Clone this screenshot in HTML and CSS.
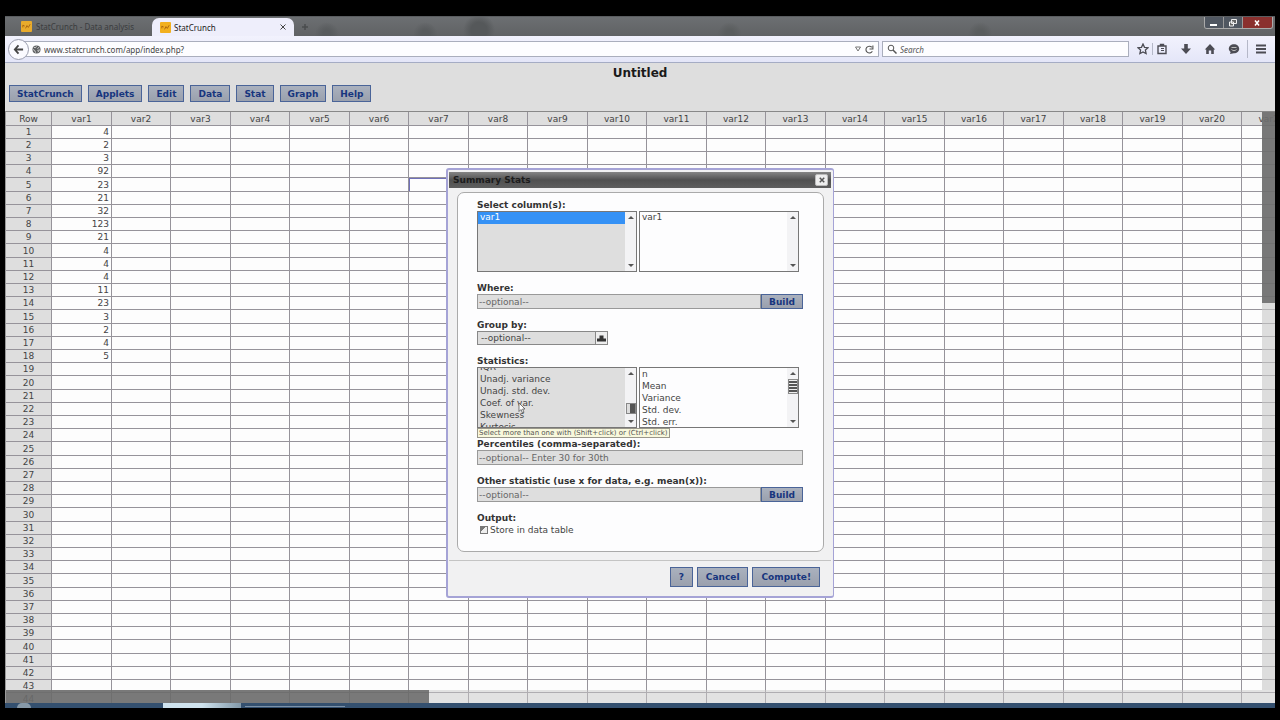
FILE: index.html
```
<!DOCTYPE html>
<html lang="en">
<head>
<meta charset="utf-8">
<title>StatCrunch</title>
<link rel="stylesheet" href="styles.css">
</head>
<body>
<div class="screen">
  <header class="titlebar">
    <div class="tab tab-idle">
      <svg class="favicon" viewBox="0 0 12 12"><rect width="12" height="12" rx="1" fill="#e9ab2c"/><path d="M2 7V4.500l2 1M5 8l1.500-3L8 7l2-3.500" stroke="#a8620f" fill="none"/></svg>
      <span>StatCrunch - Data analysis</span>
    </div>
    <div class="tab tab-active">
      <svg class="favicon" viewBox="0 0 12 12"><rect width="12" height="12" rx="1" fill="#f2b01e"/><path d="M2 7V4.500l2 1M5 8l1.500-3L8 7l2-3.500" stroke="#a8620f" fill="none"/></svg>
      <span>StatCrunch</span>
      <button class="tab-close" aria-label="Close tab"><svg viewBox="0 0 6 6"><path d="M.5.5l5 5M5.500.5l-5 5" stroke="#444" fill="none"/></svg></button>
    </div>
    <button class="tab-new" aria-label="New tab"><svg viewBox="0 0 8 8"><path d="M4 1v6M1 4h6" stroke="#4a4c4e" stroke-width="1.500"/></svg></button>
    <div class="aero"></div>
    <div class="window-buttons">
      <button class="wb" aria-label="Minimize"><svg viewBox="0 0 10 8"><path d="M1 6h7" stroke="#fff" stroke-width="2"/></svg></button>
      <button class="wb" aria-label="Restore"><svg viewBox="0 0 10 8"><path d="M3.500.5h5v4h-5zM1.500 3h4v4h-4z" stroke="#eee" fill="#666"/></svg></button>
      <button class="wb wb-close" aria-label="Close"><svg viewBox="0 0 10 8"><path d="M3 1.500l4 5M7 1.500l-4 5" stroke="#fff" stroke-width="1.500"/></svg></button>
    </div>
  </header>

  <nav class="navbar">
    <button class="back" aria-label="Back"><svg viewBox="0 0 12 12"><path d="M6 1.500L2 6l4 4.500M2 6h9" stroke="#444" stroke-width="2" fill="none"/></svg></button>
    <div class="address">
      <svg class="globe" viewBox="0 0 10 10"><circle cx="5" cy="5" r="4.500" fill="#5c5e60"/><path d="M2 2.500l2 .5 1-1.500M1 5l2 1 1 2.500M6 4l2-1.500M6 6l3-.5M6.500 8l1-1.500" stroke="#ddd" fill="none"/></svg>
      <input class="url" type="text" aria-label="Address" value="www.statcrunch.com/app/index.php?">
      <svg class="drop" viewBox="0 0 8 8"><path d="M1.500 2h5L4 6z" stroke="#777" fill="none"/></svg>
      <svg class="reload" viewBox="0 0 8 8"><path d="M6.500 5.500A3 3 0 1 1 6 2M7 .5V3.500H4" stroke="#555" fill="none"/></svg>
    </div>
    <label class="search">
      <svg class="lens" viewBox="0 0 10 10"><circle cx="4" cy="4" r="2.800" stroke="#555" fill="none"/><path d="M6 6l3.500 3.500" stroke="#555" stroke-width="1.500"/></svg>
      <input class="search-input" type="text" aria-label="Search" placeholder="Search">
    </label>
    <div class="tools">
      <button aria-label="Bookmark"><svg viewBox="0 0 12 12"><path d="M6 1l1.500 3.300 3.500.4-2.600 2.400.7 3.500L6 8.900l-3.100 1.700.7-3.500L1 4.700l3.500-.4z" stroke="#4c4c54" stroke-width="1.300" fill="none"/></svg></button>
      <i class="bar"></i>
      <button aria-label="Bookmarks list"><svg viewBox="0 0 12 12"><path d="M2 3h8v7.500H2zM4.500 1.500h3V3h-3z" stroke="#4c4c54" stroke-width="1.400" fill="none"/><path d="M5 5.500h3M5 7.500h3" stroke="#4c4c54"/></svg></button>
      <button aria-label="Downloads"><svg viewBox="0 0 12 12"><path d="M4.200 1h3.600v4.500H11L6 11 1 5.500h3.200z" fill="#4c4c54"/></svg></button>
      <button aria-label="Home"><svg viewBox="0 0 12 12"><path d="M6 1L.8 6.500h1.400V11h2.600V7.500h2.400V11h2.600V6.500h1.400z" fill="#4c4c54"/></svg></button>
      <button aria-label="Chat"><svg viewBox="0 0 12 12"><path d="M6 1.200c3 0 5.200 2 5.200 4.600S9 10.300 6 10.300L2 11l.6-2C1.500 8.200.8 7 .8 5.800.8 3.200 3 1.200 6 1.200z" fill="#4c4c54"/><path d="M3.500 6.500c1.500 1.500 3.500 1.500 5 0M3.500 4.500h5" stroke="#bbb" fill="none"/></svg></button>
      <i class="bar bar-tall"></i>
      <button aria-label="Menu"><svg viewBox="0 0 12 12"><path d="M1 2.500h10M1 6h10M1 9.500h10" stroke="#4c4c54" stroke-width="1.800"/></svg></button>
    </div>
  </nav>

  <section class="apphead">
    <h1 class="doc-title">Untitled</h1>
    <div class="menu">
      <button class="btn">StatCrunch</button>
      <button class="btn">Applets</button>
      <button class="btn">Edit</button>
      <button class="btn">Data</button>
      <button class="btn">Stat</button>
      <button class="btn">Graph</button>
      <button class="btn">Help</button>
    </div>
  </section>

  <main class="sheet">
    <table class="cells" id="cells"></table>
    <div class="vbar"><div class="vthumb"></div></div>
    <div class="hbar"><div class="hthumb"></div></div>
  </main>

  <footer class="taskbar"><i class="orb"></i><i class="task-lit"></i><i class="task-line"></i></footer>
</div>

<div class="dialog" role="dialog" aria-labelledby="dlg-title">
  <div class="dlg-bar">
    <h2 class="dlg-title" id="dlg-title">Summary Stats</h2>
    <button class="dlg-close" aria-label="Close dialog"><svg viewBox="0 0 8 8"><path d="M1 1l6 6M7 1L1 7" stroke="#555" stroke-width="2"/></svg></button>
  </div>
  <form class="dlg-body">
    <div class="field">
      <label for="cols">Select column(s):</label>
      <div class="pair">
        <div class="list list-gray">
          <select id="cols" multiple><option class="tall" selected>var1</option></select>
          <div class="sb"><i class="up"></i><i class="down"></i></div>
        </div>
        <div class="list">
          <select aria-label="Chosen columns" multiple><option class="tall">var1</option></select>
          <div class="sb"><i class="up"></i><i class="down"></i></div>
        </div>
      </div>
    </div>
    <div class="field">
      <label for="where">Where:</label>
      <div class="joined"><input id="where" class="text" type="text" placeholder="--optional--"><button type="button" class="btn build">Build</button></div>
    </div>
    <div class="field">
      <label for="group">Group by:</label>
      <div class="drop-wrap">
        <select id="group" class="dropdown"><option>--optional--</option></select>
        <span class="drop-icon"><svg viewBox="0 0 11 11"><path d="M1 9.500V6.500h2.500v-3h4v3H10v3z" fill="#333"/></svg></span>
      </div>
    </div>
    <div class="field">
      <label for="stats">Statistics:</label>
      <div class="pair">
        <div class="list list-gray">
          <select id="stats" multiple><option>Q3</option><option>IQR</option><option>Unadj. variance</option><option>Unadj. std. dev.</option><option>Coef. of var.</option><option>Skewness</option><option>Kurtosis</option><option>Sum</option></select>
          <div class="sb"><i class="up"></i><i class="grip grip-low"></i><i class="down"></i></div>
        </div>
        <div class="list list-padded">
          <select aria-label="Chosen statistics" multiple><option>n</option><option>Mean</option><option>Variance</option><option>Std. dev.</option><option>Std. err.</option></select>
          <div class="sb"><i class="up"></i><i class="grip grip-high"></i><i class="down"></i></div>
        </div>
      </div>
      <div class="tip">Select more than one with (Shift+click) or (Ctrl+click)</div>
      <svg class="pointer" viewBox="0 0 8 12"><path d="M1 1v8.500l2-2 1.500 3.500 1.500-.7L4.600 7H7z" fill="#fff" stroke="#555" stroke-width=".8"/></svg>
    </div>
    <div class="field">
      <label for="pct">Percentiles (comma-separated):</label>
      <div class="joined"><input id="pct" class="text" type="text" placeholder="--optional-- Enter 30 for 30th"></div>
    </div>
    <div class="field">
      <label for="other">Other statistic (use x for data, e.g. mean(x)):</label>
      <div class="joined"><input id="other" class="text" type="text" placeholder="--optional--"><button type="button" class="btn build">Build</button></div>
    </div>
    <div class="field">
      <span class="caption">Output:</span>
      <label class="check"><input type="checkbox">Store in data table</label>
    </div>
  </form>
  <div class="dlg-foot">
    <button class="btn foot">?</button>
    <button class="btn foot">Cancel</button>
    <button class="btn foot">Compute!</button>
  </div>
</div>
<script src="grid.js"></script>
</body>
</html>
```
FILE: styles.css
```
* { box-sizing: border-box; }
body {
  margin: 0;
  background: #000;
  color: #444;
  font-family: "DejaVu Sans", sans-serif;
  font-size: 9px;
}
button, input, select { font: inherit; color: inherit; margin: 0; padding: 0; border: 0; background: none; }
svg { display: block; }
.screen { height: 100vh; padding: 16px 5px 12px; display: flex; flex-direction: column; }

/* browser chrome */
.titlebar { flex: none; display: flex; height: 20px; background: linear-gradient(#6c6f72, #606264); border-top: 1px solid #5a5d60; }
.tab { display: flex; align-items: center; font: 8px "Noto Sans", sans-serif; }
.favicon { flex: none; width: 11px; height: 11px; }
.tab-idle { width: 147px; padding-left: 16px; gap: 4px; color: #3b3d3f; }
.tab-active { width: 142px; margin-top: 1px; padding: 0 8px; gap: 3px; border-radius: 7px 7px 0 0; background: #eeeefb; color: #222; }
.tab-close { margin-left: auto; }
.tab-close svg { width: 6px; height: 6px; }
.tab-new { margin-left: 7px; }
.tab-new svg { width: 8px; height: 8px; }
.aero {
  flex: 1;
  background:
    radial-gradient(circle at 2% 90%, #585b5d 0 4px, transparent 12px),
    radial-gradient(circle at 13% 90%, #585b5d 0 4px, transparent 12px),
    radial-gradient(circle at 19% 70%, #55585a 0 8px, transparent 16px),
    radial-gradient(circle at 47% 90%, #5a5d5e 0 4px, transparent 12px),
    radial-gradient(circle at 75% 90%, #5a5d5e 0 4px, transparent 12px);
}
.window-buttons { display: flex; align-self: flex-start; margin-right: 2px; border: 1px solid #aaa; border-top: 0; border-radius: 0 0 3px 3px; overflow: hidden; }
.wb { width: 19px; height: 11px; padding: 0 4px; background: #505761; border-right: 1px solid #999; }
.wb svg { width: 10px; height: 8px; }
.wb-close { width: 29px; padding-left: 9px; border: 0; background: #8a302e; }

.navbar { flex: none; display: flex; align-items: center; height: 27px; padding-left: 3px; background: linear-gradient(#f2f2fd, #e4e6f8); border-bottom: 1px solid #a5acc4; }
.back { width: 21px; height: 21px; padding: 4px; border: 1px solid #9a9dae; border-radius: 50%; background: #fafaff; z-index: 1; }
.back svg { width: 11px; height: 11px; }
.address { flex: 1; display: flex; align-items: center; height: 16px; margin-left: -6px; padding: 0 4px 0 8px; border: 1px solid #aaaebd; background: #fdfdff; }
.globe { width: 9px; height: 9px; }
.url { flex: 1; padding-left: 3px; font: 8px "Noto Sans", sans-serif; color: #444; }
.drop { width: 8px; height: 8px; }
.reload { width: 9px; height: 9px; margin-left: 3px; }
.search { display: flex; align-items: center; width: 247px; height: 16px; margin-left: 3px; padding-left: 4px; border: 1px solid #aaaebd; background: #fdfdff; }
.lens { width: 10px; height: 10px; }
.search-input { flex: 1; padding-left: 3px; font: italic 8px "Noto Sans", sans-serif; }
.search-input::placeholder { color: #555; opacity: 1; }
.tools { display: flex; align-items: center; gap: 12px; width: 146px; padding-left: 8px; }
.tools svg { width: 12px; height: 12px; }
.bar { flex: none; width: 1px; height: 12px; margin: 0 -9px; background: #b5b8c8; }
.bar-tall { height: 18px; margin: 0 -5px; }

/* application header */
.apphead { flex: none; height: 48px; padding: 0 4px; background: #dedede; }
.doc-title { margin: 0; padding-top: 3px; font-size: 12px; line-height: 15px; color: #1a1a1a; text-align: center; }
.menu { display: flex; gap: 6px; padding-top: 4px; }
.btn {
  height: 17px;
  padding: 0 7px;
  border: 1px solid #4a6498;
  background: linear-gradient(#aab1be, #9aa0ad);
  font-weight: bold;
  color: #17357e;
  white-space: nowrap;
}

/* spreadsheet */
.sheet { flex: 1; min-height: 0; position: relative; overflow: hidden; background: #fdfdfd; border-left: 1px solid #999; border-top: 1px solid #888; }
.cells { table-layout: fixed; width: 0; border-spacing: 0; }
.cells .c-row { width: 46px; }
.cells .c-even { width: 59px; }
.cells .c-odd { width: 60px; }
.cells th, .cells td { height: 13px; padding: 0 2px; border: solid #96939a; border-width: 0 1px 1px 0; line-height: 12px; font-weight: normal; text-align: center; white-space: nowrap; }
.cells thead th, .cells tbody tr:nth-child(5n) > * { height: 14px; }
.cells th { background: #dedede; }
.cells td { text-align: right; }
.cells td.active { box-shadow: inset 1px 1px #6f6fb8; }
.vbar { position: absolute; top: 0; right: 0; bottom: 13px; width: 13px; background: rgba(200, 200, 200, .6); }
.vthumb { height: 33%; background: rgba(95, 95, 95, .8); }
.hbar { position: absolute; left: 0; right: 0; bottom: 0; height: 13px; background: rgba(200, 200, 200, .5); }
.hthumb { width: calc(100% / 3); height: 100%; background: rgba(95, 95, 95, .8); }

.taskbar { flex: none; display: flex; height: 5px; background: #34506f; }
.orb { width: 14px; margin-left: 12px; border-radius: 7px 7px 0 0; background: #8799a8; }
.task-lit { width: 78px; margin-left: 132px; background: linear-gradient(90deg, #cfe3ee 50%, #8298a8); }
.task-line { width: 100px; height: 1px; margin: 3px 0 0 4px; background: #7d92a8; }

/* dialog */
.dialog {
  position: absolute;
  left: 446px;
  top: 168px;
  width: 388px;
  padding: 2px 2px 0 1px;
  border: 1px solid #a5a3d6;
  border-width: 2px 1px 2px 2px;
  border-radius: 3px;
  background: #f1f1f2;
}
.dlg-bar { display: flex; align-items: center; justify-content: space-between; height: 16px; padding: 0 3px 0 4px; background: linear-gradient(#858585, #505050 50%, #5e5e5e); }
.dlg-title { margin: 0; font-size: 9px; color: #1c1c1c; }
.dlg-close { width: 13px; height: 12px; padding: 2px 3px; border: 1px solid #bbb; border-radius: 2px; background: #eee; }
.dlg-close svg { width: 6px; height: 6px; }
.dlg-body { display: flex; flex-direction: column; gap: 10px; margin: 4px 7px 0 8px; padding: 6px 19px 15px; border: 1px solid #aaa; border-radius: 7px; background: #fdfdfe; }
.field { position: relative; }
.field label, .caption { display: block; line-height: 12px; font-weight: bold; color: #333; }
.pair { display: flex; gap: 2px; }
.list { display: flex; width: 160px; height: 61px; border: 1px solid #777; background: #fdfdfe; }
.list select { flex: 1; min-width: 0; overflow-y: scroll; scrollbar-width: none; outline: 0; border-radius: 0; }
.list-gray select { background: #dedede; }
.list-padded select { padding-top: 1px; }
.list option { min-height: 12px; padding: 0 2px; line-height: 12px; }
.list .tall { padding-bottom: 1px; }
.list option:checked { background: linear-gradient(#3591f5, #3591f5); color: #fff; -webkit-text-fill-color: #fff; }
.sb { display: flex; flex-direction: column; align-items: center; width: 11px; padding: 4px 0; background: #f3f3f5; }
.up, .down { border: 3px solid transparent; }
.up { border-top: 0; border-bottom-color: #555; }
.down { margin-top: auto; border-bottom: 0; border-top-color: #555; }
.grip { width: 10px; border: 1px solid #888; background: linear-gradient(90deg, #ddd 40%, #555 40%); }
.grip-low { height: 11px; margin-top: 28px; }
.grip-high { height: 15px; margin-top: 4px; background: repeating-linear-gradient(#eee 0 1px, #555 1px 3px); }
.joined { display: flex; width: 326px; }
.text { flex: 1; min-width: 0; height: 15px; padding: 0 1px; border: 1px solid #999; background: #dedede; }
.text::placeholder { color: #666; opacity: 1; }
.build { height: 15px; width: 42px; }
.drop-wrap { position: relative; width: 131px; }
.dropdown { display: block; width: 100%; height: 14px; padding: 0 3px; border: 1px solid #888; border-radius: 0; background: #dedede; appearance: none; }
.drop-icon { position: absolute; top: 1px; right: 1px; width: 12px; height: 12px; border-left: 1px solid #888; background: #eee; pointer-events: none; }
.tip { position: absolute; top: 73px; left: 0; padding: 0 1px; border: 1px solid #99968a; background: #f8f8dc; font-size: 7px; line-height: 8px; color: #555; white-space: nowrap; }
.pointer { position: absolute; left: 41px; top: 47px; width: 8px; height: 12px; }
.field .check { display: flex; align-items: center; gap: 2px; padding-left: 3px; font-weight: normal; color: #444; }
.check input { appearance: none; width: 8px; height: 8px; border: 1px solid #777; background: linear-gradient(135deg, #777 40%, #eee 40%); }
.dlg-foot { display: flex; justify-content: flex-end; gap: 4px; margin-top: 8px; padding: 6px 11px 9px; border-top: 1px solid #c4c4c4; }
.foot { height: 20px; padding: 0 8px; }
```
FILE: grid.js
```
const data = [4, 2, 3, 92, 23, 21, 32, 123, 21, 4, 4, 4, 11, 23, 3, 2, 4, 5];
const columns = 21;
const rows = 44;
const active = { row: 5, column: 7 };

let html = '<colgroup><col class="c-row">';
for (let c = 1; c <= columns; c++) html += `<col class="${c % 2 ? 'c-odd' : 'c-even'}">`;
html += '</colgroup><thead><tr><th scope="col">Row</th>';
for (let c = 1; c <= columns; c++) html += `<th scope="col">var${c}</th>`;
html += '</tr></thead><tbody>';
for (let r = 1; r <= rows; r++) {
  html += `<tr><th scope="row">${r}</th>`;
  for (let c = 1; c <= columns; c++) {
    const value = c === 1 && data[r - 1] !== undefined ? data[r - 1] : '';
    const cls = r === active.row && c === active.column ? ' class="active"' : '';
    html += `<td${cls}>${value}</td>`;
  }
  html += '</tr>';
}
document.getElementById('cells').innerHTML = html + '</tbody>';
document.getElementById('stats').scrollTop = 18;
```
